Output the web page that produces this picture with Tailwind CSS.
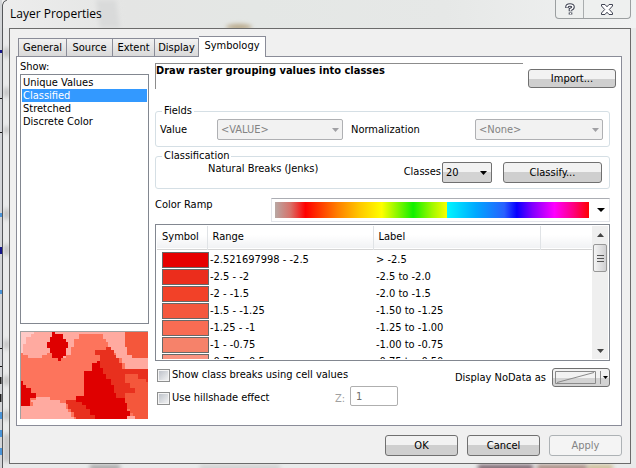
<!DOCTYPE html>
<html lang="en">
<head>
<meta charset="utf-8">
<title>Layer Properties</title>
<script src="https://cdn.jsdelivr.net/npm/@tailwindcss/browser@4"></script>
</head>
<body class="relative min-h-screen bg-[#e9eaea] font-['DejaVu_Sans_Condensed','DejaVu_Sans',sans-serif] text-[11px] leading-[14px] text-black">
<svg class="absolute inset-0 h-full w-full" aria-hidden="true">
  <defs>
    <filter id="soft" x="-100%" y="-100%" width="300%" height="300%"><feGaussianBlur stdDeviation="2"/></filter>
    <linearGradient id="glass"><stop offset="0" stop-color="#ededed"/><stop offset=".2" stop-color="#e4e5e4"/><stop offset=".4" stop-color="#e4e7e5"/><stop offset=".7" stop-color="#e6e8e7"/><stop offset="1" stop-color="#f1f2f2"/></linearGradient>
  </defs>
  <rect width="100%" height="28" fill="url(#glass)"/>
  <path d="M96 0H116L120 28H100Z" fill="#d9dada" filter="url(#soft)"/>
  <ellipse cx="239" cy="27" rx="13" ry="3" fill="#b9a98a" filter="url(#soft)"/>
  <g fill="#a8a8a8" filter="url(#soft)"><rect x="5" y="48" width="3" height="9"/><rect x="5" y="88" width="3" height="9"/><rect x="5" y="127" width="3" height="6"/><rect x="5" y="209" width="3" height="10"/><rect x="5" y="245" width="3" height="10"/><rect x="5" y="340" width="3" height="9"/><rect x="5" y="376" width="3" height="9"/><rect x="5" y="411" width="3" height="9"/><rect x="5" y="434" width="3" height="28"/></g>
  <rect width="2" height="100%" fill="#d3d5d8"/>
  <g><path d="M0 98.500h2M0 132.500h2M0 348.500h2M0 366.500h2" stroke="#111"/><path d="M0 50h2v3H0zM0 247h2v7H0z" fill="#15158a"/><path d="M0 412h2v7H0zM0 430h2v7H0zM0 448h2v7H0zM0 213h2v4H0zM0 290h2v4H0z" fill="#4a94d8"/><path d="M0 377h1.500v7H0zM0 394h1.500v8H0z" fill="#222"/></g>
  <path d="M2.500 468V5Q3 1 7 0" fill="none" stroke="#55575a"/>
  <g filter="url(#soft)"><rect x="90" y="465" width="30" height="5" fill="#a0a0a0"/><rect x="200" y="465" width="80" height="5" fill="#cfcfcf"/><rect x="478" y="465" width="55" height="5" fill="#6d5460"/><rect x="537" y="465" width="50" height="5" fill="#a08075"/><rect x="588" y="465" width="25" height="5" fill="#c9b98e"/></g>
</svg>

<main class="relative flex flex-col pr-[5px] pl-[9px]">
  <header class="flex h-7 items-start">
    <h1 class="flex-1 pt-[6px] pl-px font-['Open_Sans','Noto_Sans',sans-serif] text-[12px] leading-[16px]">Layer Properties</h1>
    <div class="flex h-[19px] w-[76px] rounded-b-[4px] border border-t-0 border-[#9b9fa0] bg-[#eef0ef]">
      <button type="button" aria-label="Help" class="flex w-[28px] items-center justify-center border-r border-[#a9adae]">
        <svg width="10" height="13" viewBox="0 0 10 13" fill="none"><path d="M2 5V4Q2 2 5 2T8 4Q8 5.500 5.500 6.500V8.200M5.500 9.500v2" stroke="#3f4352" stroke-width="3.600"/><path d="M2 4.500V4Q2 2 5 2T8 4Q8 5.500 5.500 6.500V7.800M5.500 10v1.200" stroke="#fff" stroke-width="1.500"/></svg>
      </button>
      <button type="button" aria-label="Close" class="flex flex-1 items-center justify-center">
        <svg width="12" height="11" viewBox="0 0 12 11"><path d="M.5.5H4L6 2.800 8 .5h3.500v1.500L8.300 5.500l3.200 3.500v1.500H8L6 8.200 4 10.500H.5V9l3.200-3.500L.5 2z" fill="#fff" stroke="#3f4352"/></svg>
      </button>
    </div>
  </header>

  <div class="border border-[#6b6b6b] bg-[#f0f0f0] pt-[7px] pr-2 pb-[7px] pl-[6px]">
    <nav class="flex h-5 items-end pl-[2px]" aria-label="Layer property pages">
      <button type="button" class="h-[18px] w-[49px] border border-b-0 border-[#8a8c98] bg-linear-to-b from-[#f2f2f2] to-[#d9d9d9]">General</button>
      <button type="button" class="h-[18px] w-[46px] border border-b-0 border-l-0 border-[#8a8c98] bg-linear-to-b from-[#f2f2f2] to-[#d9d9d9]">Source</button>
      <button type="button" class="h-[18px] w-[42px] border border-b-0 border-l-0 border-[#8a8c98] bg-linear-to-b from-[#f2f2f2] to-[#d9d9d9]">Extent</button>
      <button type="button" class="h-[18px] w-[44px] border border-b-0 border-l-0 border-[#8a8c98] bg-linear-to-b from-[#f2f2f2] to-[#d9d9d9]">Display</button>
      <button type="button" aria-current="page" class="relative -mb-px h-[21px] w-[67px] border border-b-0 border-l-0 border-[#8a8c98] bg-white pb-[3px]">Symbology</button>
    </nav>

    <section class="flex gap-[6px] border border-[#8a8c98] bg-white pr-[5px] pb-[6px] pl-[3px]">
      <div class="w-[129px] shrink-0 pt-[3px]">
        <h2 id="show">Show:</h2>
        <ul aria-labelledby="show" class="h-[250px] border border-[#828790] p-px leading-[13px]">
          <li class="pl-px">Unique Values</li>
          <li class="bg-[#3399ff] pl-px text-white">Classified</li>
          <li class="pl-px">Stretched</li>
          <li class="pl-px">Discrete Color</li>
        </ul>
        <svg class="mt-[7px] block" width="128" height="88" viewBox="0 0 128 88" shape-rendering="crispEdges" role="img" aria-label="Raster preview">
          <rect width="128" height="88" fill="#fd745c"/>
          <path d="M0 0H128V40H105V32H102V27H96V22H94V19H88V11H86V8H83V3H59V8H54V16H51V24H46V27H35V22H27V24H22V27H8V24H3V22H0Z" fill="#ffaaa0"/>
          <path d="M0 0H14V3H11V6H6V13H3V22H0Z" fill="#ffcac6"/>
          <path d="M105 0H128V27H112V24H107V16H105Z" fill="#f4573b"/>
          <path d="M32 0H35V3H43V8H46V11H48V17H46V25H43V27H41V30H38V27H32V22H30V17H27V11H30V6H32Z" fill="#df0000"/>
          <path d="M86 16H91V19H94V24H96V27H99V32H102V38H128V51H126V48H118V43H105V72H110V78H102V88H56V86H54V81H51V78H48V73H46V69H56V65H64V40H72V32H80V24H75V19H86Z" fill="#e8301e"/>
          <path d="M105 43H118V48H126V51H128V88H113V82H110V78H105V72H102V68H105Z" fill="#f4573b"/>
          <path d="M105 52H110V57H115V62H105V67H99V62H96V57H102Z" fill="#e8301e"/>
          <path d="M77 30H80V37H83V43H86V48H91V54H94V62H96V67H105V72H107V80H110V85H112V88H75V84H70V78H66V74H62V71H56V65H64V40H72V32H77Z" fill="#df0000"/>
          <path d="M0 50H3V54H6V57H11V62H16V67H10V75H0Z" fill="#df0000"/>
          <path d="M0 75H13V71H11V69H16V66H30V69H40V72H46V78H48V81H51V86H54V88H0Z" fill="#ffaaa0"/>
          <path d="M107 85h8v3h-8z" fill="#ffaaa0"/>
          <path d="M0 88V0H128" fill="none" stroke="#a0a0a0" stroke-width="2"/>
        </svg>
      </div>

      <form class="min-w-0 flex-1 pt-[6px]">
        <div class="flex h-[26px] gap-[5px]">
          <h2 class="flex-1 border-t border-l border-[#8c8c8c] font-bold">Draw raster grouping values into classes</h2>
          <button type="button" class="mt-[6px] h-[19px] w-[88px] rounded-[3px] border border-[#707070] bg-linear-to-b from-[#f2f2f2] from-50% to-[#cfcfcf] to-50% leading-[17px]">Import...</button>
        </div>

        <div class="pr-[6px]">
          <fieldset class="mt-4 rounded-[3px] border border-[#d5dfe5] pb-[6px] pl-1">
            <legend class="ml-[2px] px-[2px] leading-[12px]">Fields</legend>
            <div class="flex items-center pt-[2px] pr-[6px]">
              <label for="value" class="w-[57px]">Value</label>
              <div class="relative w-[126px]">
                <select id="value" disabled class="block h-[21px] w-full appearance-none rounded-[2px] border border-[#afb0b3] bg-[#f2f2f2] pl-[3px] text-[#838383] opacity-100"><option>&lt;VALUE&gt;</option></select>
                <svg class="pointer-events-none absolute top-[9px] right-[4px]" width="7" height="4"><path d="M0 0h7L3.500 4z" fill="#a0a0a4"/></svg>
              </div>
              <label for="norm" class="ml-2">Normalization</label>
              <div class="relative ml-auto w-[128px]">
                <select id="norm" disabled class="block h-[21px] w-full appearance-none rounded-[2px] border border-[#afb0b3] bg-[#f2f2f2] pl-[3px] text-[#838383] opacity-100"><option>&lt;None&gt;</option></select>
                <svg class="pointer-events-none absolute top-[9px] right-[4px]" width="7" height="4"><path d="M0 0h7L3.500 4z" fill="#a0a0a4"/></svg>
              </div>
            </div>
          </fieldset>

          <fieldset class="mt-[3px] rounded-[3px] border border-[#d5dfe5] pr-[7px] pb-[5px]">
            <legend class="ml-[6px] px-[2px] leading-[12px]">Classification</legend>
            <div class="flex h-[21px] items-start">
              <span class="flex-1 pl-[52px]">Natural Breaks (Jenks)</span>
              <label for="classes" class="pt-[3px] pr-px">Classes</label>
              <div class="relative w-[50px]">
                <select id="classes" class="block h-[21px] w-full appearance-none rounded-[2px] border border-[#707070] bg-linear-to-b from-[#f2f2f2] from-50% to-[#d3d3d3] to-50% pl-[3px]"><option>20</option></select>
                <svg class="pointer-events-none absolute top-[9px] right-[5px]" width="7" height="4"><path d="M0 0h7L3.500 4z"/></svg>
              </div>
              <button type="button" class="ml-[11px] h-[21px] w-[99px] rounded-[3px] border border-[#707070] bg-linear-to-b from-[#f2f2f2] from-50% to-[#cfcfcf] to-50%">Classify...</button>
            </div>
          </fieldset>

          <div class="mt-[9px] flex items-start">
            <span id="ramp" class="w-[116px]">Color Ramp</span>
            <button type="button" aria-labelledby="ramp" class="flex h-6 flex-1 items-center border border-[#e3e5ea] border-t-[#abadb3] pr-1 pl-[3px]">
              <span class="h-4 flex-1 bg-[linear-gradient(90deg,#b8a8a4_0%,#d87068_5%,#ff0000_9.700%,#ff8000_20%,#ffc800_27%,#ffff00_34%,#a0f800_38%,#10f000_44%,#a0f800_50%,#f8ff00_54.700%,#00f8ff_54.700%,#00a8ff_64%,#2860ff_73%,#0800ff_77%,#8000ff_82%,#ff00ff_89%,#ff0080_95%,#ff0000_100%)]"></span>
              <svg class="ml-2" width="8" height="4"><path d="M0 0h8L4 4z"/></svg>
            </button>
          </div>

          <div class="mt-[2px] flex h-[137px] border border-[#828790] p-px">
            <div class="min-w-0 flex-1 overflow-hidden">
              <table class="w-full table-fixed border-collapse text-left">
                <colgroup><col class="w-[50px]"><col class="w-[166px]"><col class="w-[167px]"><col></colgroup>
                <thead>
                  <tr class="h-[23px] border-b border-[#d5d5d5] bg-linear-to-b from-white from-40% to-[#f1f2f4]">
                    <th class="border-r border-[#e0e3e6] pl-[5px] font-normal">Symbol</th>
                    <th class="border-r border-[#e0e3e6] pl-[5px] font-normal">Range</th>
                    <th class="border-r border-[#e0e3e6] pl-[5px] font-normal">Label</th>
                    <th></th>
                  </tr>
                </thead>
                <tbody>
                  <tr class="h-[2px]"><td colspan="4"></td></tr>
                  <tr class="h-[17px]"><td class="pl-[5px]"><div class="h-4 w-[47px] border border-[#686868] bg-[#e60000]"></div></td><td class="pl-[3px]">-2.521697998 - -2.5</td><td class="pl-[3px]">&gt; -2.5</td><td></td></tr>
                  <tr class="h-[17px]"><td class="pl-[5px]"><div class="h-4 w-[47px] border border-[#686868] bg-[#eb2d1c]"></div></td><td class="pl-[3px]">-2.5 - -2</td><td class="pl-[3px]">-2.5 to -2.0</td><td></td></tr>
                  <tr class="h-[17px]"><td class="pl-[5px]"><div class="h-4 w-[47px] border border-[#686868] bg-[#f24128]"></div></td><td class="pl-[3px]">-2 - -1.5</td><td class="pl-[3px]">-2.0 to -1.5</td><td></td></tr>
                  <tr class="h-[17px]"><td class="pl-[5px]"><div class="h-4 w-[47px] border border-[#686868] bg-[#f4573d]"></div></td><td class="pl-[3px]">-1.5 - -1.25</td><td class="pl-[3px]">-1.50 to -1.25</td><td></td></tr>
                  <tr class="h-[17px]"><td class="pl-[5px]"><div class="h-4 w-[47px] border border-[#686868] bg-[#f86c53]"></div></td><td class="pl-[3px]">-1.25 - -1</td><td class="pl-[3px]">-1.25 to -1.00</td><td></td></tr>
                  <tr class="h-[17px]"><td class="pl-[5px]"><div class="h-4 w-[47px] border border-[#686868] bg-[#f6826a]"></div></td><td class="pl-[3px]">-1 - -0.75</td><td class="pl-[3px]">-1.00 to -0.75</td><td></td></tr>
                  <tr class="h-[17px]"><td class="pl-[5px]"><div class="h-4 w-[47px] border border-[#686868] bg-[#fa9482]"></div></td><td class="pl-[3px]">-0.75 - -0.5</td><td class="pl-[3px]">-0.75 to -0.50</td><td></td></tr>
                </tbody>
              </table>
            </div>
            <div class="flex w-[16px] flex-col items-center bg-[#efefef]">
              <svg class="mt-[7px] shrink-0" width="7" height="4"><path d="M0 4h7L3.500 0z" fill="#444"/></svg>
              <div class="mt-[7px] flex h-7 w-[14px] flex-col items-center justify-center gap-[2px] rounded-[2px] border border-[#979797] bg-linear-to-r from-[#f4f4f4] to-[#d0d0d2]">
                <span class="h-px w-[7px] bg-[#555]"></span><span class="h-px w-[7px] bg-[#555]"></span><span class="h-px w-[7px] bg-[#555]"></span>
              </div>
              <svg class="mt-auto mb-[6px] shrink-0" width="7" height="4"><path d="M0 0h7L3.500 4z" fill="#444"/></svg>
            </div>
          </div>

          <div class="flex items-start pl-[2px]">
            <div class="mt-[7px] flex w-[178px] flex-col gap-[9px]">
              <label class="flex items-center gap-[2px] whitespace-nowrap"><input type="checkbox" class="h-[13px] w-[13px] shrink-0 appearance-none border border-[#8e8f8f] bg-linear-to-br from-[#b9bec6] to-[#f6f6f6] shadow-[inset_0_0_0_1px_#f4f4f4]">Show class breaks using cell values</label>
              <label class="flex items-center gap-[2px] whitespace-nowrap"><input type="checkbox" class="h-[13px] w-[13px] shrink-0 appearance-none border border-[#8e8f8f] bg-linear-to-br from-[#b9bec6] to-[#f6f6f6] shadow-[inset_0_0_0_1px_#f4f4f4]">Use hillshade effect</label>
            </div>
            <div class="mt-[25px] flex w-[63px] items-center justify-between">
              <label for="z" class="pt-[6px] text-[#a0a0a0]">Z:</label>
              <input id="z" type="text" value="1" disabled class="h-5 w-12 rounded-[2px] border border-[#afafaf] bg-white px-[5px] text-[#6d6d6d]">
            </div>
            <div class="mt-[7px] ml-auto flex items-center gap-[6px]">
              <span id="nodata">Display NoData as</span>
              <button type="button" aria-labelledby="nodata" class="flex h-[19px] w-[58px] items-center rounded-[3px] border border-[#707070] bg-linear-to-b from-[#f2f2f2] from-50% to-[#d3d3d3] to-50% pl-px">
                <svg width="55" height="17" viewBox="0 0 55 17"><path d="M1.500 2.500h40v12h-40zM3 13.500L40 3.500" fill="none" stroke="#8a8a8a"/><path d="M46.500 2v13" stroke="#8a8a8a"/><path d="M49 7h5L51.500 10z"/></svg>
              </button>
            </div>
          </div>
        </div>
      </form>
    </section>

    <footer class="mt-[9px] flex justify-end gap-[9px]">
      <button type="button" class="h-[21px] w-[73px] rounded-[3px] border border-[#707070] bg-linear-to-b from-[#f2f2f2] from-50% to-[#cfcfcf] to-50%">OK</button>
      <button type="button" class="h-[21px] w-[73px] rounded-[3px] border border-[#707070] bg-linear-to-b from-[#f2f2f2] from-50% to-[#cfcfcf] to-50%">Cancel</button>
      <button type="button" disabled class="h-[21px] w-[73px] rounded-[3px] border border-[#adb2b5] bg-[#f4f4f4] text-[#838383]">Apply</button>
    </footer>
  </div>
</main>
</body>
</html>
